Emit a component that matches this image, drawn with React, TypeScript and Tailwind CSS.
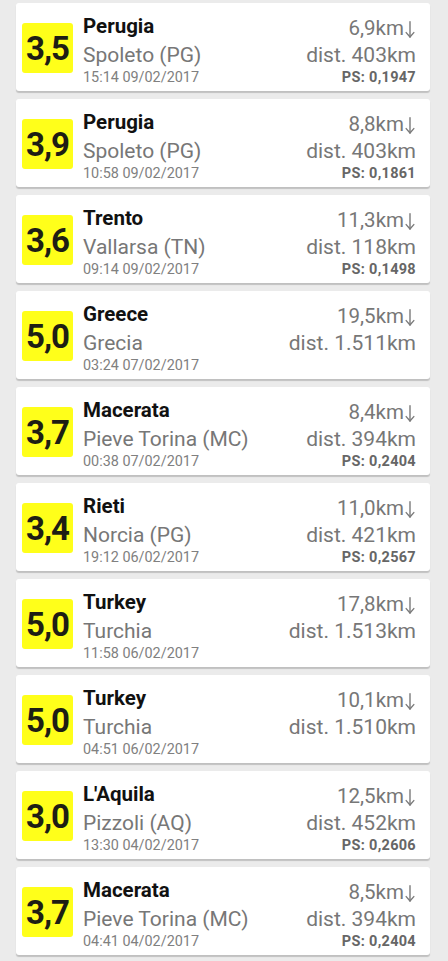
import React from "react";

type Quake = {
  mag: string;
  region: string;
  place: string;
  time: string;
  depth: string;
  dist: string;
  ps?: string;
};

const data: Quake[] = [
  { mag: "3,5", region: "Perugia", place: "Spoleto (PG)", time: "15:14 09/02/2017", depth: "6,9km", dist: "dist. 403km", ps: "PS: 0,1947" },
  { mag: "3,9", region: "Perugia", place: "Spoleto (PG)", time: "10:58 09/02/2017", depth: "8,8km", dist: "dist. 403km", ps: "PS: 0,1861" },
  { mag: "3,6", region: "Trento", place: "Vallarsa (TN)", time: "09:14 09/02/2017", depth: "11,3km", dist: "dist. 118km", ps: "PS: 0,1498" },
  { mag: "5,0", region: "Greece", place: "Grecia", time: "03:24 07/02/2017", depth: "19,5km", dist: "dist. 1.511km" },
  { mag: "3,7", region: "Macerata", place: "Pieve Torina (MC)", time: "00:38 07/02/2017", depth: "8,4km", dist: "dist. 394km", ps: "PS: 0,2404" },
  { mag: "3,4", region: "Rieti", place: "Norcia (PG)", time: "19:12 06/02/2017", depth: "11,0km", dist: "dist. 421km", ps: "PS: 0,2567" },
  { mag: "5,0", region: "Turkey", place: "Turchia", time: "11:58 06/02/2017", depth: "17,8km", dist: "dist. 1.513km" },
  { mag: "5,0", region: "Turkey", place: "Turchia", time: "04:51 06/02/2017", depth: "10,1km", dist: "dist. 1.510km" },
  { mag: "3,0", region: "L'Aquila", place: "Pizzoli (AQ)", time: "13:30 04/02/2017", depth: "12,5km", dist: "dist. 452km", ps: "PS: 0,2606" },
  { mag: "3,7", region: "Macerata", place: "Pieve Torina (MC)", time: "04:41 04/02/2017", depth: "8,5km", dist: "dist. 394km", ps: "PS: 0,2404" },
];

function DownArrow() {
  return (
    <svg
      width="12"
      height="17"
      viewBox="0 0 12 17"
      className="inline-block align-[-3px]"
      fill="none"
      stroke="#7a7a7a"
      strokeWidth="1.4"
      strokeLinecap="round"
    >
      <path d="M6 0.8 V16" />
      <path d="M2.2 11.6 L6 16 L9.8 11.6" />
    </svg>
  );
}

function Card({ q }: { q: Quake }) {
  return (
    <div className="h-[88px] bg-white rounded-[3px] shadow-[0_2px_1px_rgba(0,0,0,0.18)] flex items-start pl-[6px] pr-[14px]">
      <div className="mt-[20px] w-[51px] h-[50px] bg-[#ffff1a] rounded-[3px] flex items-center justify-center shrink-0">
        <span className="text-[33px] font-bold text-[#1e1e14] tracking-[-1px] leading-none">{q.mag}</span>
      </div>
      <div className="flex-1 flex flex-col pl-[10px] pt-[9px]">
        <div className="text-[20.5px] font-bold text-[#111111] leading-[29px]">{q.region}</div>
        <div className="text-[21px] text-[#777777] leading-[28px]">{q.place}</div>
        <div className="text-[14.4px] text-[#808080] leading-[18px]">{q.time}</div>
      </div>
      <div className="flex flex-col items-end pt-[12px]">
        <div className="text-[20.5px] text-[#777777] leading-[26px] whitespace-nowrap">
          {q.depth}
          <DownArrow />
        </div>
        <div className="text-[21px] text-[#777777] leading-[28px] whitespace-nowrap">{q.dist}</div>
        <div className="text-[14.5px] font-bold text-[#666666] leading-[18px] tracking-[0.3px] whitespace-nowrap">{q.ps ?? "\u00a0"}</div>
      </div>
    </div>
  );
}

export default function App() {
  return (
    <div
      className="w-[448px] h-[961px] overflow-hidden bg-[#ebebeb] pl-[16px] pr-[18px] pt-[3px] flex flex-col gap-[8px]"
      style={{ fontFamily: "Roboto, 'Noto Sans', sans-serif" }}
    >
      {data.map((q, i) => (
        <Card key={i} q={q} />
      ))}
    </div>
  );
}
